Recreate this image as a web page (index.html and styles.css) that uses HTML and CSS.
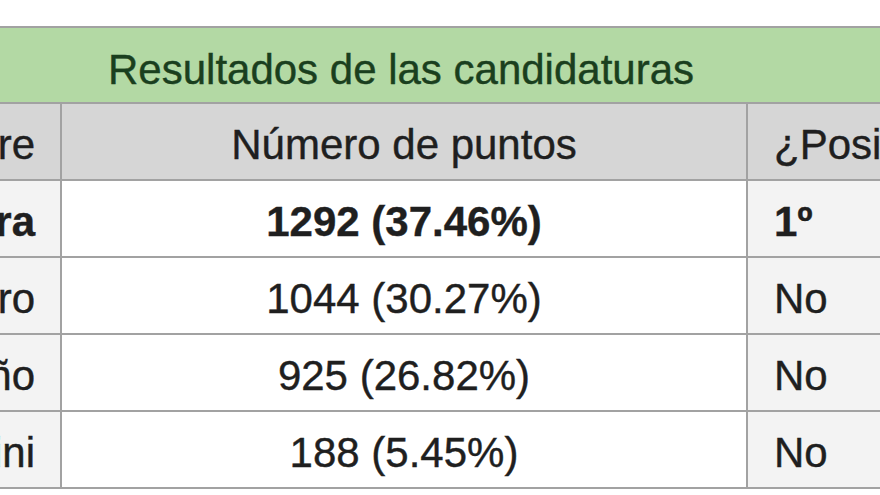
FILE: index.html
```html
<!DOCTYPE html>
<html lang="es">
<head>
<meta charset="utf-8">
<title>Resultados de las candidaturas</title>
<link rel="stylesheet" href="styles.css">
</head>
<body>
<div class="page">
  <div class="results">
    <div class="title">Resultados de las candidaturas</div>
    <div class="cell head name"><span>Nombre</span></div>
    <div class="cell head pts">Número de puntos</div>
    <div class="cell head pos">¿Posición?</div>

    <div class="cell name bold"><span>ra</span></div>
    <div class="cell pts bold">1292 (37.46%)</div>
    <div class="cell pos bold">1º</div>

    <div class="cell name"><span>ro</span></div>
    <div class="cell pts">1044 (30.27%)</div>
    <div class="cell pos">No</div>

    <div class="cell name"><span>ño</span></div>
    <div class="cell pts">925 (26.82%)</div>
    <div class="cell pos">No</div>

    <div class="cell name"><span>ini</span></div>
    <div class="cell pts">188 (5.45%)</div>
    <div class="cell pos">No</div>
  </div>
</div>
</body>
</html>
```

FILE: styles.css
```css
html, body {
  margin: 0;
  padding: 0;
  background: #ffffff;
  overflow: hidden;
}

.page {
  width: 880px;
  height: 495px;
  overflow: hidden;
  padding-top: 26px;
  box-sizing: border-box;
}

.results {
  display: grid;
  grid-template-columns: 60px 684px 1fr;
  grid-template-rows: 74px repeat(5, 75px);
  gap: 2px;
  padding: 2px 0;
  background: #a2a2a2;
  font-family: "Liberation Sans", Arial, sans-serif;
  font-size: 42px;
  color: #1f1f1f;
  -webkit-text-stroke: 0.4px currentColor;
}

.title {
  grid-column: 1 / -1;
  background: #b3d9a4;
  color: #1a3f1e;
  display: flex;
  align-items: center;
  padding-left: 108px;
  padding-top: 10px;
  box-sizing: border-box;
  white-space: nowrap;
}

.cell {
  display: flex;
  align-items: center;
  white-space: nowrap;
  overflow: hidden;
  background: #f3f3f3;
  padding-top: 7px;
  box-sizing: border-box;
}

.cell.pts {
  background: #ffffff;
  justify-content: center;
}

.cell.name {
  justify-content: flex-end;
  padding-right: 25px;
}

.cell.pos {
  padding-left: 26px;
}

.cell.head {
  background: #d6d6d6;
}

.bold {
  font-weight: bold;
}
```
